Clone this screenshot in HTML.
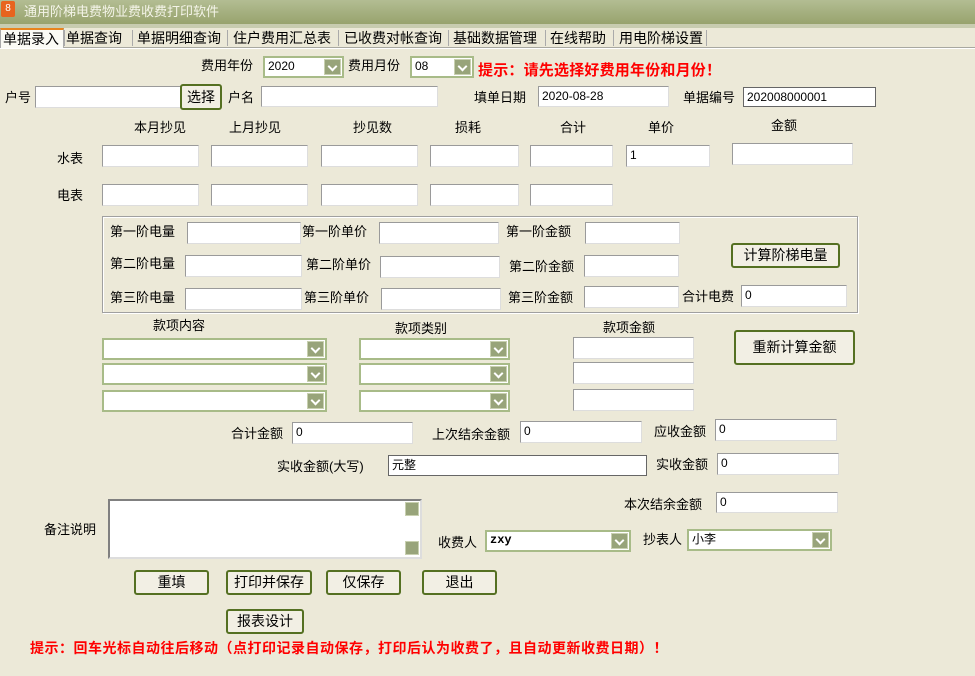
<!DOCTYPE html><html><head><meta charset="utf-8"><style>
body{margin:0;width:975px;height:676px;background:#ECE9D8;position:relative;overflow:hidden;font-family:"Liberation Sans","Noto Sans CJK SC","WenQuanYi Zen Hei",sans-serif;font-size:13px;color:#000}
div,span{position:absolute;box-sizing:border-box}
.t{white-space:nowrap;line-height:14px}
.i{background:#fff;border:1px solid #9a9a9a;border-right-color:#ddd;border-bottom-color:#ddd;font-size:12px;line-height:18px;padding-left:3px}
.c{background:#fff;border:2px solid #a8bb88;font-size:12px;line-height:17px;padding-left:3px}
.c:after{content:"";position:absolute;right:1px;top:1px;width:15px;bottom:1px;background:#98a47a;border:1px solid #c8d0b0}
.c:before{content:"";position:absolute;right:6px;top:5px;width:5px;height:5px;border-right:2px solid #fff;border-bottom:2px solid #fff;transform:rotate(45deg);z-index:2}
.b{background:#f2efe4;border:2px solid #557022;border-radius:3px;text-align:center;font-size:14px}
.r{color:#f00;font-weight:bold;font-size:15px}
</style></head><body>
<div style="left:0;top:0;width:975px;height:24px;background:linear-gradient(#b3bd93,#a2ad7c 60%,#98a36e)"></div>
<div style="left:1px;top:1px;width:14px;height:16px;background:#e8641e;border-radius:2px;color:#fff;font-size:10px;text-align:center;line-height:16px">8</div>
<div class="t" style="left:24px;top:5px;color:#f4f4e8;font-size:13px">通用阶梯电费物业费收费打印软件</div>
<div style="left:0;top:24px;width:975px;height:4px;background:#c8ccb0"></div>
<div style="left:0;top:47px;width:975px;height:2px;background:#a8a8a0;border-bottom:1px solid #fff"></div>
<div class="t" style="left:0;top:28px;width:64px;height:20px;background:#fbfbf5;border:1px solid #aaa;border-top:2px solid #e8841e;border-bottom:none;padding:2px 0 0 2px;font-size:14px">单据录入</div>
<div class="t" style="left:66px;top:31px;font-size:14px">单据查询</div>
<div class="t" style="left:137px;top:31px;font-size:14px">单据明细查询</div>
<div class="t" style="left:233px;top:31px;font-size:14px">住户费用汇总表</div>
<div class="t" style="left:344px;top:31px;font-size:14px">已收费对帐查询</div>
<div class="t" style="left:453px;top:31px;font-size:14px">基础数据管理</div>
<div class="t" style="left:550px;top:31px;font-size:14px">在线帮助</div>
<div class="t" style="left:619px;top:31px;font-size:14px">用电阶梯设置</div>
<div style="left:64px;top:30px;width:1px;height:16px;background:#aaa"></div><div style="left:132px;top:30px;width:1px;height:16px;background:#aaa"></div><div style="left:227px;top:30px;width:1px;height:16px;background:#aaa"></div><div style="left:338px;top:30px;width:1px;height:16px;background:#aaa"></div><div style="left:448px;top:30px;width:1px;height:16px;background:#aaa"></div><div style="left:545px;top:30px;width:1px;height:16px;background:#aaa"></div><div style="left:613px;top:30px;width:1px;height:16px;background:#aaa"></div><div style="left:706px;top:30px;width:1px;height:16px;background:#aaa"></div>

<div class="t" style="left:201px;top:59px">费用年份</div><div class="c" style="left:263px;top:56px;width:81px;height:22px">2020</div>
<div class="t" style="left:348px;top:59px">费用月份</div><div class="c" style="left:410px;top:56px;width:64px;height:22px">08</div>
<div class="t r" style="left:478px;top:64px;letter-spacing:0.2px">提示：请先选择好费用年份和月份！</div>

<div class="t" style="left:5px;top:91px">户号</div><div class="i" style="left:35px;top:86px;width:147px;height:22px"></div>
<div class="b" style="left:180px;top:84px;width:42px;height:26px;line-height:22px">选择</div>
<div class="t" style="left:228px;top:91px">户名</div><div class="i" style="left:261px;top:86px;width:177px;height:21px"></div>
<div class="t" style="left:474px;top:91px">填单日期</div><div class="i" style="left:538px;top:86px;width:131px;height:21px">2020-08-28</div>
<div class="t" style="left:683px;top:91px">单据编号</div><div class="i" style="left:743px;top:87px;width:133px;height:20px;border:1px solid #666">202008000001</div>

<div class="t" style="left:134px;top:121px">本月抄见</div><div class="t" style="left:229px;top:121px">上月抄见</div><div class="t" style="left:353px;top:121px">抄见数</div><div class="t" style="left:455px;top:121px">损耗</div><div class="t" style="left:560px;top:121px">合计</div><div class="t" style="left:648px;top:121px">单价</div><div class="t" style="left:771px;top:119px">金额</div>
<div class="t" style="left:57px;top:152px">水表</div>
<div class="i" style="left:102px;top:145px;width:97px;height:22px"></div><div class="i" style="left:211px;top:145px;width:97px;height:22px"></div><div class="i" style="left:321px;top:145px;width:97px;height:22px"></div><div class="i" style="left:430px;top:145px;width:89px;height:22px"></div><div class="i" style="left:530px;top:145px;width:83px;height:22px"></div><div class="i" style="left:626px;top:145px;width:84px;height:22px">1</div><div class="i" style="left:732px;top:143px;width:121px;height:22px"></div>
<div class="t" style="left:57px;top:189px">电表</div>
<div class="i" style="left:102px;top:184px;width:97px;height:22px"></div><div class="i" style="left:211px;top:184px;width:97px;height:22px"></div><div class="i" style="left:321px;top:184px;width:97px;height:22px"></div><div class="i" style="left:430px;top:184px;width:89px;height:22px"></div><div class="i" style="left:530px;top:184px;width:83px;height:22px"></div>

<div style="left:102px;top:216px;width:756px;height:97px;border:1px solid #a0a0a0;box-shadow:inset 1px 1px 0 #fff,1px 1px 0 #fff"></div>
<div class="t" style="left:110px;top:225px">第一阶电量</div><div class="i" style="left:187px;top:222px;width:114px;height:22px"></div>
<div class="t" style="left:302px;top:225px">第一阶单价</div><div class="i" style="left:379px;top:222px;width:120px;height:22px"></div>
<div class="t" style="left:506px;top:225px">第一阶金额</div><div class="i" style="left:585px;top:222px;width:95px;height:22px"></div>
<div class="b" style="left:731px;top:243px;width:109px;height:25px;line-height:21px">计算阶梯电量</div>
<div class="t" style="left:110px;top:257px">第二阶电量</div><div class="i" style="left:185px;top:255px;width:117px;height:22px"></div>
<div class="t" style="left:306px;top:258px">第二阶单价</div><div class="i" style="left:380px;top:256px;width:120px;height:22px"></div>
<div class="t" style="left:509px;top:260px">第二阶金额</div><div class="i" style="left:584px;top:255px;width:95px;height:22px"></div>
<div class="t" style="left:110px;top:291px">第三阶电量</div><div class="i" style="left:185px;top:288px;width:117px;height:22px"></div>
<div class="t" style="left:304px;top:291px">第三阶单价</div><div class="i" style="left:381px;top:288px;width:120px;height:22px"></div>
<div class="t" style="left:508px;top:291px">第三阶金额</div><div class="i" style="left:584px;top:286px;width:95px;height:22px"></div>
<div class="t" style="left:682px;top:290px">合计电费</div><div class="i" style="left:741px;top:285px;width:106px;height:22px">0</div>

<div class="t" style="left:153px;top:319px">款项内容</div><div class="t" style="left:395px;top:322px">款项类别</div><div class="t" style="left:603px;top:321px">款项金额</div>
<div class="c" style="left:102px;top:338px;width:225px;height:22px"></div><div class="c" style="left:102px;top:363px;width:225px;height:22px"></div><div class="c" style="left:102px;top:390px;width:225px;height:22px"></div>
<div class="c" style="left:359px;top:338px;width:151px;height:22px"></div><div class="c" style="left:359px;top:363px;width:151px;height:22px"></div><div class="c" style="left:359px;top:390px;width:151px;height:22px"></div>
<div class="i" style="left:573px;top:337px;width:121px;height:22px"></div><div class="i" style="left:573px;top:362px;width:121px;height:22px"></div><div class="i" style="left:573px;top:389px;width:121px;height:22px"></div>
<div class="b" style="left:734px;top:330px;width:121px;height:35px;line-height:31px">重新计算金额</div>

<div class="t" style="left:231px;top:427px">合计金额</div><div class="i" style="left:292px;top:422px;width:121px;height:22px">0</div>
<div class="t" style="left:432px;top:428px">上次结余金额</div><div class="i" style="left:520px;top:421px;width:122px;height:22px">0</div>
<div class="t" style="left:654px;top:425px">应收金额</div><div class="i" style="left:715px;top:419px;width:122px;height:22px">0</div>
<div class="t" style="left:277px;top:460px">实收金额(大写)</div><div class="i" style="left:388px;top:455px;width:259px;height:21px;border:1px solid #666">元整</div>
<div class="t" style="left:656px;top:458px">实收金额</div><div class="i" style="left:717px;top:453px;width:122px;height:22px">0</div>
<div class="t" style="left:624px;top:498px">本次结余金额</div><div class="i" style="left:716px;top:492px;width:122px;height:21px">0</div>
<div class="t" style="left:44px;top:523px">备注说明</div>
<div class="i" style="left:108px;top:499px;width:314px;height:60px;border:2px solid #808080;border-right-color:#ddd;border-bottom-color:#ddd"></div>
<div style="left:405px;top:502px;width:14px;height:14px;background:#98a47a;border:1px solid #c8d0b0"></div><div style="left:405px;top:541px;width:14px;height:14px;background:#98a47a;border:1px solid #c8d0b0"></div>
<div class="t" style="left:438px;top:536px">收费人</div><div class="c" style="left:485px;top:530px;width:146px;height:22px;font-family:'Liberation Mono',monospace;font-weight:bold">zxy</div>
<div class="t" style="left:643px;top:533px">抄表人</div><div class="c" style="left:687px;top:529px;width:145px;height:22px">小李</div>

<div class="b" style="left:134px;top:570px;width:75px;height:25px;line-height:21px">重填</div>
<div class="b" style="left:226px;top:570px;width:86px;height:25px;line-height:21px">打印并保存</div>
<div class="b" style="left:326px;top:570px;width:75px;height:25px;line-height:21px">仅保存</div>
<div class="b" style="left:422px;top:570px;width:75px;height:25px;line-height:21px">退出</div>
<div class="b" style="left:226px;top:609px;width:78px;height:25px;line-height:21px">报表设计</div>
<div class="t r" style="left:30px;top:641px;font-size:14px;letter-spacing:0.5px">提示：回车光标自动往后移动（点打印记录自动保存，打印后认为收费了，且自动更新收费日期）！</div>
</body></html>
